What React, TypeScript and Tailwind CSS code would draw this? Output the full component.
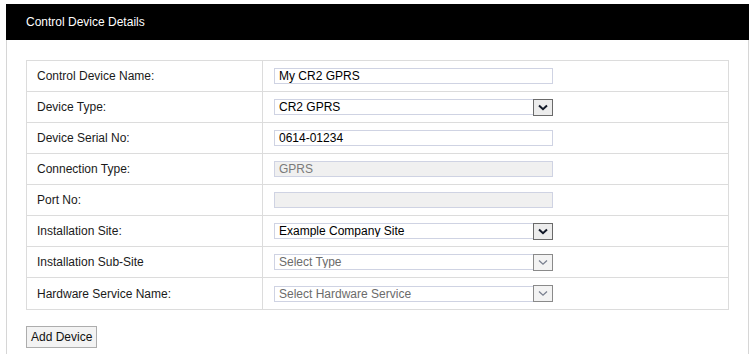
import React from 'react';

type Field = {
  label: string;
  kind: 'text' | 'select';
  value?: string;
  disabled?: boolean;
};

const fields: Field[] = [
  { label: 'Control Device Name:', kind: 'text', value: 'My CR2 GPRS' },
  { label: 'Device Type:', kind: 'select', value: 'CR2 GPRS' },
  { label: 'Device Serial No:', kind: 'text', value: '0614-01234' },
  { label: 'Connection Type:', kind: 'text', value: 'GPRS', disabled: true },
  { label: 'Port No:', kind: 'text', value: '', disabled: true },
  { label: 'Installation Site:', kind: 'select', value: 'Example Company Site' },
  { label: 'Installation Sub-Site', kind: 'select', value: 'Select Type', disabled: true },
  { label: 'Hardware Service Name:', kind: 'select', value: 'Select Hardware Service', disabled: true },
];

const Chevron = ({ disabled }: { disabled?: boolean }) => (
  <svg width="10" height="7" viewBox="0 0 10 7">
    <path
      d="M1 1.5 L5 5.2 L9 1.5"
      fill="none"
      stroke={disabled ? '#7a8090' : '#111827'}
      strokeWidth={disabled ? 1.3 : 2}
    />
  </svg>
);

const FieldInput = ({ field }: { field: Field }) => {
  const base = 'w-[279px] h-[16px] border border-[#cfd3e3] flex items-center text-[12px] leading-none';
  if (field.kind === 'select') {
    return (
      <div className={`${base} bg-white pl-[4px] ${field.disabled ? 'text-[#6b6b6b]' : 'text-black'}`}>
        <span className="flex-1 truncate">{field.value}</span>
        <span
          className={`w-[20px] h-[17px] -mr-px flex items-center justify-center border ${
            field.disabled ? 'bg-[#f3f3f3] border-[#8a8a8a]' : 'bg-[#ececec] border-[#6a6a6a]'
          }`}
        >
          <Chevron disabled={field.disabled} />
        </span>
      </div>
    );
  }
  return (
    <div
      className={`${base} pl-[4px] ${
        field.disabled ? 'bg-[#f0f0f0] text-[#7a7a7a]' : 'bg-white text-black'
      }`}
    >
      {field.value}
    </div>
  );
};

export default function App() {
  return (
    <div className="w-[755px] h-[354px] bg-white pt-[4px] px-[6px] font-['Liberation_Sans',Arial,sans-serif] overflow-hidden">
      <div className="w-[743px] h-[350px] border-x border-[#d6d6d6]">
        <div className="h-[36px] -mx-px bg-black flex items-center pl-[20px] text-[12px] text-white">
          Control Device Details
        </div>
        <div className="pt-[20px] px-[19px]">
          <div className="border border-[#dcdcdc]">
            {fields.map((f, i) => (
              <div
                key={f.label}
                className={`flex h-[31px] ${i < fields.length - 1 ? 'border-b border-[#dcdcdc]' : ''}`}
              >
                <div className="w-[236px] border-r border-[#dcdcdc] flex items-center pl-[10px] text-[12px] text-[#1a1a1a]">
                  {f.label}
                </div>
                <div className="flex-1 flex items-center pl-[11px]">
                  <FieldInput field={f} />
                </div>
              </div>
            ))}
          </div>
          <button className="mt-[16px] h-[22px] px-[4px] bg-[#f3f3f3] border border-[#adadad] text-[12px] text-[#111] leading-none">
            Add Device
          </button>
        </div>
      </div>
    </div>
  );
}
